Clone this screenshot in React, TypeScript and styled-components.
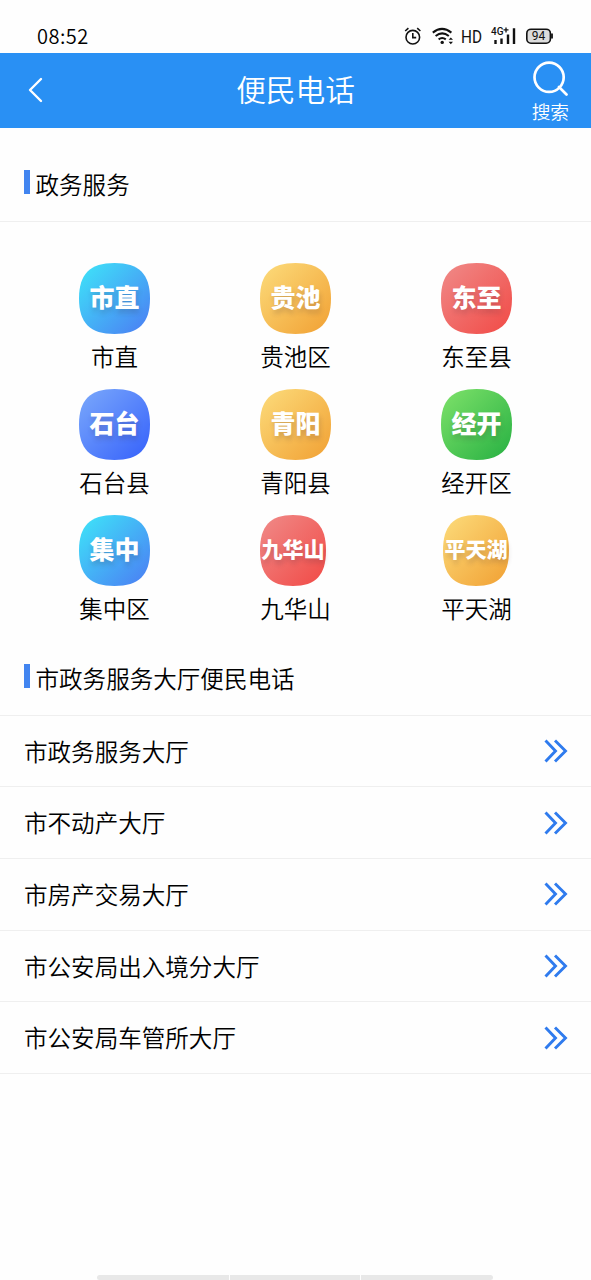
import React from "react";
import styled, { createGlobalStyle } from "styled-components";

const Global = createGlobalStyle`
  * { box-sizing: border-box; }
  body {
    margin: 0;
    background: #fefefe;
    color: #000;
    font-family: "Noto Sans CJK SC", sans-serif;
    font-weight: 350;
  }
`;

const Screen = styled.div`
  display: flex;
  flex-direction: column;
  width: 591px;
  height: 1280px;
  overflow: hidden;
`;

const StatusBar = styled.div`
  display: flex;
  align-items: center;
  justify-content: space-between;
  height: 52.5px;
  padding: 20px 37px 0 37px;
  flex: none;
`;

const Clock = styled.span`
  font-size: 20px;
  line-height: 30px;
  letter-spacing: 0.5px;
`;

const Header = styled.header`
  display: grid;
  grid-template-columns: 90px 1fr 90px;
  align-items: center;
  height: 75.5px;
  background: #2990f4;
  color: #fff;
  flex: none;
`;

const BackButton = styled.button`
  display: flex;
  padding: 0 0 0 27px;
  border: 0;
  background: none;
`;

const Title = styled.h1`
  margin: 0;
  padding-bottom: 2px;
  text-align: center;
  font-size: 29.7px;
  font-weight: 350;
  line-height: 40px;
`;

const SearchButton = styled.button`
  display: flex;
  flex-direction: column;
  align-items: center;
  justify-self: end;
  margin-right: 22px;
  padding: 3px 0 0;
  border: 0;
  background: none;
  color: #fff;
  font: 350 18.7px/24px "Noto Sans CJK SC", sans-serif;
`;

const SearchLabel = styled.span`
  margin-top: 2px;
`;

const SectionTitle = styled.div<{ $top: number; $bottom: number }>`
  display: flex;
  align-items: flex-start;
  gap: 6px;
  padding: ${(p) => p.$top}px 24px ${(p) => p.$bottom}px 23.5px;
  border-bottom: 1px solid #efefef;
  font-size: 23.55px;
  line-height: 28px;
  flex: none;
`;

const Marker = styled.i`
  width: 6px;
  height: 24px;
  background: #4285f0;
`;

const Regions = styled.div`
  display: grid;
  grid-template-columns: repeat(3, 1fr);
  grid-auto-rows: 126px;
  padding: 40.5px 24px 0;
  flex: none;
`;

const Region = styled.div`
  display: flex;
  flex-direction: column;
  align-items: center;
  font-size: 23.5px;
  line-height: 32px;
`;

const Badge = styled.div<{ $shift: number }>`
  display: grid;
  place-items: center;
  margin-left: ${(p) => p.$shift}px;
  margin-bottom: 6px;
  > * { grid-area: 1 / 1; }
`;

const BadgeText = styled.span<{ $size: number }>`
  color: #fff;
  font-size: ${(p) => p.$size}px;
  font-weight: 900;
  line-height: 34px;
  margin-bottom: 4px;
  white-space: nowrap;
  text-shadow: 1px 4px 5px rgba(60, 40, 60, 0.2);
`;

const Row = styled.div`
  display: flex;
  align-items: center;
  justify-content: space-between;
  height: 71.7px;
  padding: 0.4px 23px 0 24px;
  border-bottom: 1px solid #efefef;
  font-size: 23.55px;
  line-height: 34px;
  flex: none;
`;

const RowText = styled.span`
  margin-bottom: 1px;
`;

const HomeIndicator = styled.div`
  display: flex;
  gap: 1px;
  width: 396px;
  height: 5px;
  margin: auto 0 0 97px;
  border-radius: 3px;
  overflow: hidden;
`;

const Segment = styled.span<{ $width: number }>`
  width: ${(p) => p.$width}px;
  background: #e8e8e8;
`;

const tones = {
  cyan: ["#3fdcf8", "#4a86f4"],
  gold: ["#fbd674", "#f2a63a"],
  red: ["#f08482", "#f1504c"],
  blue: ["#74a2fb", "#3c68fb"],
  green: ["#76dd66", "#2fb546"],
};

type Tone = keyof typeof tones;

const regions: { short: string; name: string; tone: Tone; shift?: number }[] = [
  { short: "市直", name: "市直", tone: "cyan" },
  { short: "贵池", name: "贵池区", tone: "gold" },
  { short: "东至", name: "东至县", tone: "red" },
  { short: "石台", name: "石台县", tone: "blue" },
  { short: "青阳", name: "青阳县", tone: "gold" },
  { short: "经开", name: "经开区", tone: "green" },
  { short: "集中", name: "集中区", tone: "cyan" },
  { short: "九华山", name: "九华山", tone: "red", shift: -5 },
  { short: "平天湖", name: "平天湖", tone: "gold", shift: -1 },
];

const halls = ["市政务服务大厅", "市不动产大厅", "市房产交易大厅", "市公安局出入境分大厅", "市公安局车管所大厅"];

function Squircle({ tone, width }: { tone: Tone; width: number }) {
  const id = `${tone}-${width}`;
  const [from, to] = tones[tone];
  return (
    <svg width={width} height="71" viewBox="0 0 71 71" preserveAspectRatio="none">
      <defs>
        <linearGradient id={id} x1="0.1" y1="0.1" x2="0.9" y2="0.9">
          <stop offset="0" stopColor={from} />
          <stop offset="1" stopColor={to} />
        </linearGradient>
      </defs>
      <path
        d="M35.5 0C60 0 71 11 71 35.5C71 60 60 71 35.5 71C11 71 0 60 0 35.5C0 11 11 0 35.5 0Z"
        fill={`url(#${id})`}
      />
    </svg>
  );
}

function StatusIcons() {
  return (
    <svg width="150" height="24" viewBox="404 24 150 24" fill="none" stroke="#111" strokeWidth="1.6">
      <circle cx="412.8" cy="37.2" r="6.8" />
      <path d="M412.8 33v4.6h3.4M405.2 31l3.2-2.8M420.4 31l-3.2-2.8" />
      <path d="M432.8 32.6q9.2-7.4 18.6 0M435.6 36q6.6-5.2 13.2 0M438.6 39.4q3.6-2.6 7.2 0" strokeWidth="2" />
      <circle cx="442.2" cy="42.4" r="1.7" fill="#111" stroke="none" />
      <path d="M448.6 39.8l2.2-2.4 2.2 2.4zM448.6 41.8l2.2 2.4 2.2-2.4z" fill="#111" stroke="none" />
      <text x="461" y="43" fontFamily="Roboto, sans-serif" fontSize="18" fontWeight="400" textLength="21" lengthAdjust="spacingAndGlyphs" fill="#111" stroke="none">HD</text>
      <text x="491" y="35.2" fontFamily="Roboto, sans-serif" fontSize="10.5" fontWeight="500" textLength="12.5" lengthAdjust="spacingAndGlyphs" fill="#111" stroke="none">4G</text>
      <path d="M503.5 29.8h5M506 27.4v5" strokeWidth="1.3" />
      <path d="M495.5 40v4M501.5 38.5v5.5M508 34.5v9.5M514 28.2v15.8" strokeWidth="2.4" />
      <rect x="526.8" y="29.2" width="23.6" height="14" rx="4.2" fill="#dcdcdc" />
      <path d="M552 33.6v5" strokeWidth="1.8" />
      <text x="538.5" y="40.3" textAnchor="middle" fontFamily="Roboto, sans-serif" fontSize="12" fontWeight="400" fill="#111" stroke="none">94</text>
    </svg>
  );
}

export default function App() {
  return (
    <Screen>
      <Global />
      <StatusBar>
        <Clock>08:52</Clock>
        <StatusIcons />
      </StatusBar>
      <Header>
        <BackButton aria-label="返回">
          <svg width="18" height="28" viewBox="0 0 18 28" fill="none" stroke="#fff" strokeWidth="2.4" strokeLinecap="round" strokeLinejoin="round">
            <path d="M14 3L3 14L14 25" />
          </svg>
        </BackButton>
        <Title>便民电话</Title>
        <SearchButton>
          <svg width="36" height="36" viewBox="0 0 36 36" fill="none" stroke="#fff" strokeWidth="2.7" strokeLinecap="round">
            <circle cx="17.1" cy="16.3" r="14.6" />
            <path d="M27 26L34.5 33.5" />
          </svg>
          <SearchLabel>搜索</SearchLabel>
        </SearchButton>
      </Header>
      <SectionTitle $top={42} $bottom={23}>
        <Marker />
        <span>政务服务</span>
      </SectionTitle>
      <Regions>
        {regions.map((r) => {
          const wide = r.short.length === 3;
          return (
            <Region key={r.name}>
              <Badge $shift={r.shift ?? 0}>
                <Squircle tone={r.tone} width={wide ? 66 : 71} />
                <BadgeText $size={wide ? 21 : 25}>{r.short}</BadgeText>
              </Badge>
              {r.name}
            </Region>
          );
        })}
      </Regions>
      <SectionTitle $top={23} $bottom={23}>
        <Marker />
        <span>市政务服务大厅便民电话</span>
      </SectionTitle>
      {halls.map((hall) => (
        <Row key={hall}>
          <RowText>{hall}</RowText>
          <svg width="24" height="24" viewBox="0 0 24 24" fill="none" stroke="#2f7bee" strokeWidth="2.9">
            <path d="M1.5 1.5L11.5 12L1.5 22.5M11 1.5L21.5 12L11 22.5" />
          </svg>
        </Row>
      ))}
      <HomeIndicator>
        <Segment $width={132} />
        <Segment $width={130} />
        <Segment $width={132} />
      </HomeIndicator>
    </Screen>
  );
}
